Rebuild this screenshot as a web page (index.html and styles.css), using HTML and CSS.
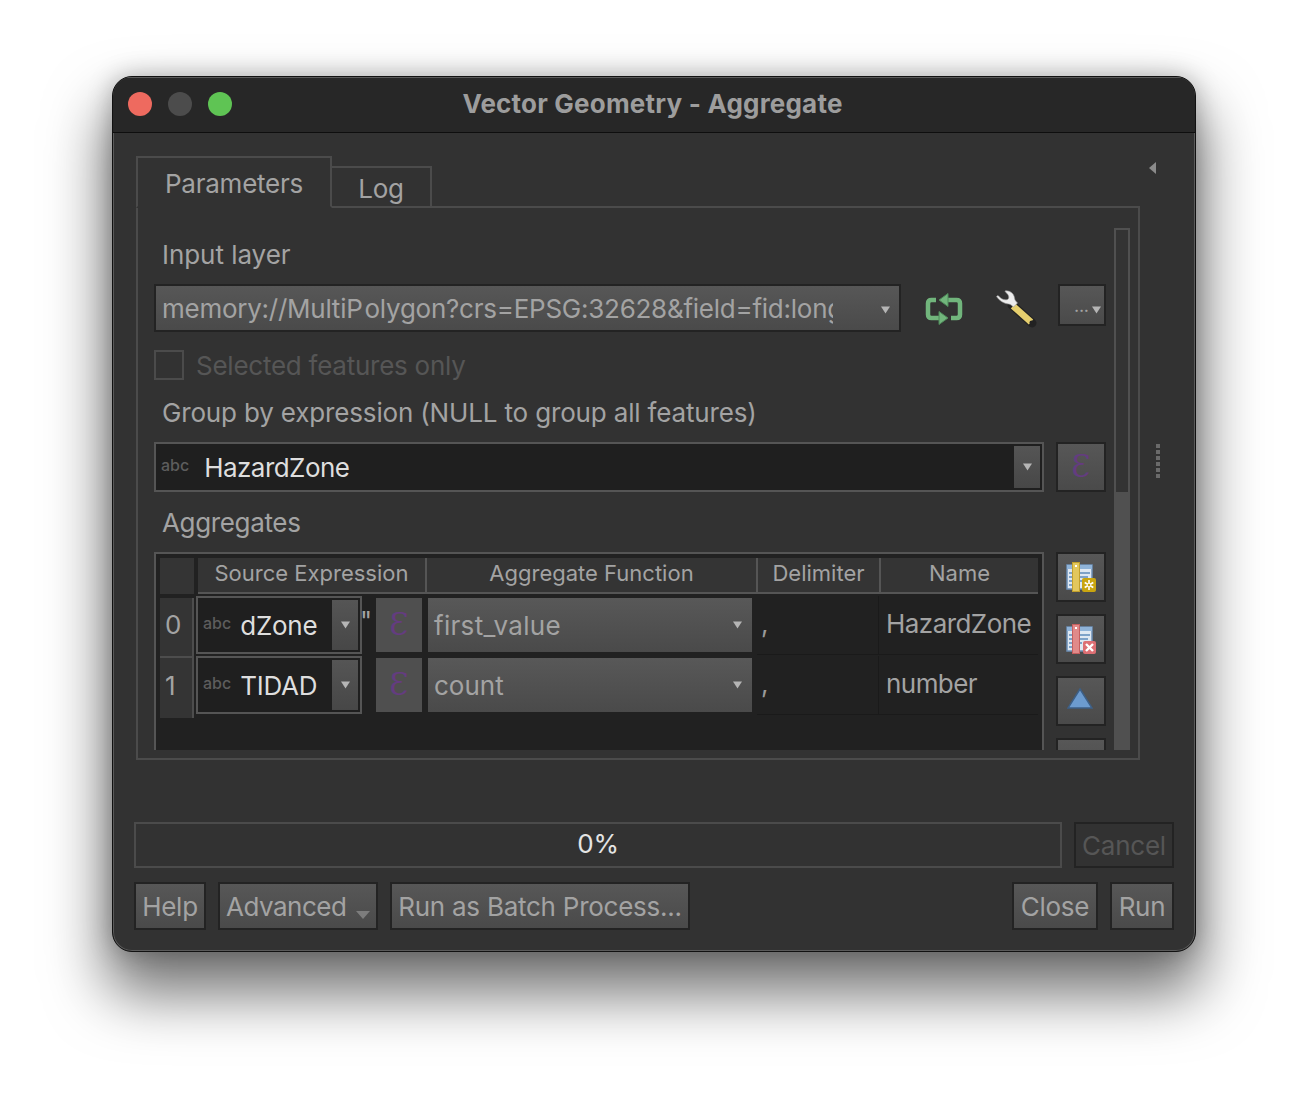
FILE: index.html
```html
<!DOCTYPE html>
<html lang="en">
<head>
<meta charset="utf-8">
<title>Vector Geometry - Aggregate</title>
<link rel="stylesheet" href="styles.css">
</head>
<body>
<svg class="defs" width="0" height="0" aria-hidden="true">
  <symbol id="arrow" viewBox="0 0 10 8"><path d="M0 0h10L5 8z"/></symbol>
</svg>

<main class="window">
  <header class="titlebar">
    <div class="lights">
      <span class="light red"></span><span class="light grey"></span><span class="light green"></span>
    </div>
    <h1 class="title">Vector Geometry - Aggregate</h1>
  </header>

  <div class="body">
    <div class="tabs">
      <div class="tab active">Parameters</div>
      <div class="tab">Log</div>
    </div>
    <svg class="collapse" width="7" height="12" viewBox="0 0 7 12"><path d="M7 0v12L0 6z" fill="#8b8b8b"/></svg>
    <div class="splitter"><i></i><i></i><i></i><i></i><i></i><i></i></div>

    <section class="pane">
      <div class="pane-main">
        <label class="label first">Input layer</label>
        <div class="layer-row">
          <div class="combo layer-combo">
            <span class="combo-text">memory://MultiP<span class="gap">olygon?crs=EPSG:32628&amp;field=fid:long</span></span>
            <svg class="arrow-s"><use href="#arrow"/></svg>
          </div>
          <svg class="ico-refresh" width="38" height="33" viewBox="0 0 38 33">
            <g fill="none" stroke="#71b57c" stroke-width="4.500" stroke-linejoin="round">
              <path d="M11 7H6.500Q3 7 3 10.500v11Q3 25 6.500 25H16"/>
              <path d="M21 7h10.500Q35 7 35 10.500v11q0 3.500-3.500 3.500H26"/>
            </g>
            <path d="M23 .5v13l-9-6.500zM14 18.500v13l9-6.500z" fill="#71b57c" stroke="#4f8a5a" stroke-width="1"/>
          </svg>
          <svg class="ico-wrench" width="42" height="38" viewBox="0 0 42 38">
            <path d="M17 15L37 33" stroke="#222" stroke-width="9" stroke-linecap="round"/>
            <path d="M18 16l18 16" stroke="#e6cf6e" stroke-width="6.500"/>
            <circle cx="36.500" cy="32.500" r="2" fill="#222"/>
            <path d="M10 1C14 0 19 3 19.500 8c.2 2 1.500 3.500 3 5l-4 4c-1.600-1.500-3-2.800-5-3C9 13.500 4.500 11 1.500 6.500L3 5.500C6 9 9.500 10.500 12.500 9.500 14.500 8.500 14 5.500 12 3.500 11 2.500 10 1.800 10 1z" fill="#ececec" stroke="#9a9a9a" stroke-width=".6"/>
          </svg>
          <button class="btn more" type="button"><span>...</span><svg class="arrow-s"><use href="#arrow"/></svg></button>
        </div>

        <div class="check-row">
          <span class="check"></span>
          <span class="check-label">Selected features only</span>
        </div>

        <label class="label group">Group by expression (NULL to group all features)</label>
        <div class="group-row">
          <div class="field-combo wide">
            <span class="abc">abc</span>
            <span class="field-text">HazardZone</span>
            <span class="drop"><svg class="arrow-s"><use href="#arrow"/></svg></span>
          </div>
          <button class="btn side-eps" type="button"><span class="eps">Ɛ</span></button>
        </div>

        <label class="label aggs">Aggregates</label>
        <div class="agg-row">
          <div class="table">
            <div class="thead">
              <div class="corner"></div>
              <div class="th c-src">Source Expression</div>
              <div class="th c-fn">Aggregate Function</div>
              <div class="th c-del">Delimiter</div>
              <div class="th c-name">Name</div>
            </div>
            <div class="trow">
              <div class="vh">0</div>
              <div class="field-combo small">
                <span class="abc">abc</span>
                <span class="field-text">dZone</span>
                <span class="drop"><svg class="arrow-s"><use href="#arrow"/></svg></span>
              </div>
              <div class="quote">"</div>
              <button class="eps-cell" type="button"><span class="eps">Ɛ</span></button>
              <div class="fn-combo"><span class="fn-long">first_value</span><svg class="arrow-s"><use href="#arrow"/></svg></div>
              <div class="td del">,</div>
              <div class="td name">HazardZone</div>
            </div>
            <div class="trow">
              <div class="vh last">1</div>
              <div class="field-combo small">
                <span class="abc">abc</span>
                <span class="field-text">TIDAD</span>
                <span class="drop"><svg class="arrow-s"><use href="#arrow"/></svg></span>
              </div>
              <div class="quote"></div>
              <button class="eps-cell" type="button"><span class="eps">Ɛ</span></button>
              <div class="fn-combo"><span>count</span><svg class="arrow-s"><use href="#arrow"/></svg></div>
              <div class="td del">,</div>
              <div class="td name">number</div>
            </div>
          </div>
          <div class="side-btns">
            <button class="btn side" type="button">
              <svg width="30" height="30" viewBox="0 0 30 30">
                <rect x="1" y="3" width="25" height="24" fill="#dfe8f2" stroke="#6c8fb5" stroke-width="1.500"/>
                <path d="M1 3h25v4H1z" fill="#8fb3d8"/>
                <path d="M13 11h11M13 15h9M13 19h3M3 11h3M3 15h3M3 19h3M3 23h3" stroke="#7ea2c8" stroke-width="2"/>
                <rect x="6.500" y="0.500" width="7" height="29" fill="#e2c75c" stroke="#c2a02c"/>
                <rect x="9" y="3" width="2" height="2" fill="#fff"/>
                <rect x="16" y="16" width="14" height="14" rx="2" fill="#c9a510"/>
                <path d="M23 18v10M18.700 20.500l8.600 5M27.300 20.500l-8.600 5" stroke="#fff" stroke-width="1.600"/>
                <circle cx="23" cy="23" r="1.300" fill="#c9a510"/>
              </svg>
            </button>
            <button class="btn side" type="button">
              <svg width="30" height="30" viewBox="0 0 30 30">
                <rect x="1" y="3" width="25" height="24" fill="#dfe8f2" stroke="#6c8fb5" stroke-width="1.500"/>
                <path d="M1 3h25v4H1z" fill="#8fb3d8"/>
                <path d="M13 11h11M13 15h9M13 19h3M3 11h3M3 15h3M3 19h3M3 23h3" stroke="#7ea2c8" stroke-width="2"/>
                <rect x="6.500" y="0.500" width="7" height="29" fill="#e08a8a" stroke="#c65f5f"/>
                <rect x="9" y="3" width="2" height="2" fill="#fff"/>
                <rect x="17" y="17" width="13" height="13" rx="2" fill="#dd6f74"/>
                <path d="M20 20l7 7M27 20l-7 7" stroke="#fff" stroke-width="2.400"/>
              </svg>
            </button>
            <button class="btn side tri" type="button">
              <svg width="26" height="22" viewBox="0 0 26 22"><path d="M13 1l12 19H1z" fill="#6c9bcf" stroke="#3d5f86" stroke-width="1.500"/></svg>
            </button>
            <button class="btn side" type="button"></button>
          </div>
        </div>
      </div>
      <div class="scrollbar"><div class="handle"></div></div>
    </section>

    <div class="progress-row">
      <div class="progress">0%</div>
      <button class="btn cancel" type="button">Cancel</button>
    </div>

    <div class="button-row">
      <button class="btn help" type="button">Help</button>
      <button class="btn advanced" type="button"><span>Advanced</span><svg class="adv-arrow" viewBox="0 0 14 8"><path d="M0 0h14L7 8z"/></svg></button>
      <button class="btn batch" type="button">Run as Batch Process...</button>
      <span class="spacer"></span>
      <button class="btn close" type="button">Close</button>
      <button class="btn run" type="button">Run</button>
    </div>
  </div>
</main>
</body>
</html>
```

FILE: styles.css
```css
* { box-sizing: border-box; }

html, body { margin: 0; height: 100%; background: #fff; overflow: hidden; }

body {
  padding: 76px 112px 0;
  font-family: Inter, "Liberation Sans", sans-serif;
  font-size: 26px;
  letter-spacing: -.25px;
  color: #a3a3a3;
}

.defs { position: absolute; }

.window {
  width: 1084px;
  height: 876px;
  border-radius: 20px;
  background: #323232;
  border: 1px solid #111;
  box-shadow: inset 0 0 0 1px #5a5a5a, 0 36px 60px 6px rgba(0, 0, 0, .55), 0 0 24px rgba(0, 0, 0, .25);
  overflow: hidden;
  display: flex;
  flex-direction: column;
}

.titlebar {
  height: 56px;
  flex: none;
  background: #272727;
  border-bottom: 1px solid #0e0e0e;
  box-shadow: inset 0 1px 0 #5a5a5a;
  position: relative;
  display: flex;
  align-items: center;
  justify-content: center;
}

.lights { position: absolute; left: 15px; top: 15px; display: flex; gap: 16px; }
.light { width: 24px; height: 24px; border-radius: 50%; }
.red { background: #ee6a5f; }
.grey { background: #4c4c4c; }
.green { background: #5fc454; }

.title { margin: 0; font-size: 26px; font-weight: 700; color: #9d9d9d; letter-spacing: .2px; padding: 0 3px 3px 0; }

.body { flex: 1; position: relative; padding: 23px 21px 0; display: flex; flex-direction: column; }

.tabs { display: flex; align-items: flex-end; height: 52px; margin-left: 2px; position: relative; z-index: 1; margin-bottom: -2px; }
.tab {
  height: 42px;
  width: 100px;
  border: 2px solid #4b4b4b;
  border-left: 0;
  display: flex;
  align-items: center;
  justify-content: center;
  padding-top: 2px;
}
.tab.active {
  height: 52px;
  width: 196px;
  border-left: 2px solid #4b4b4b;
  border-bottom-color: #323232;
  padding: 2px 0 0;
  background: #323232;
}

.collapse { position: absolute; left: 1036px; top: 29px; }
.splitter { position: absolute; left: 1043px; top: 311px; display: grid; gap: 2px; }
.splitter i { display: block; width: 4px; height: 4px; background: #6a6a6a; }

.pane {
  margin-left: 2px;
  width: 1004px;
  height: 554px;
  border: 2px solid #4b4b4b;
  padding: 20px 8px 8px 16px;
  display: flex;
  gap: 8px;
}
.pane-main { width: 952px; height: 522px; overflow: hidden; flex: none; }

.label { display: block; padding-left: 8px; line-height: 32px; }
.label.first { height: 56px; line-height: 54px; letter-spacing: -.05px; }
.label.group { height: 46px; line-height: 34px; letter-spacing: -.16px; }
.label.aggs { height: 60px; line-height: 62px; letter-spacing: -.35px; }

.layer-row { display: flex; align-items: flex-start; height: 66px; }

.combo {
  width: 748px;
  height: 48px;
  background: linear-gradient(#575757, #4a4a4a);
  border: 2px solid #232323;
  display: flex;
  align-items: center;
  padding-left: 6px;
  position: relative;
}
.combo-text { width: 671px; overflow: hidden; white-space: nowrap; letter-spacing: -.25px; }
.gap { margin-left: 2px; }

.arrow-s { width: 9px; height: 8px; fill: #b5b5b5; flex: none; }
.layer-combo .arrow-s { position: absolute; right: 9px; top: 20px; }

.ico-refresh { margin: 9px 0 0 24px; flex: none; }
.ico-wrench { margin: 6px 0 0 32px; flex: none; }

.btn {
  font: inherit;
  letter-spacing: inherit;
  color: #a3a3a3;
  height: 48px;
  padding: 0 6px;
  background: linear-gradient(#575757, #4a4a4a);
  border: 2px solid #232323;
  white-space: nowrap;
}
.more { width: 48px; height: 42px; margin-left: 21px; position: relative; padding: 0; flex: none; }
.more span { position: absolute; left: 14px; top: 8px; font-size: 18px; line-height: 24px; }
.more .arrow-s { position: absolute; right: 3px; top: 20px; }

.check-row { display: flex; align-items: center; height: 30px; gap: 12px; margin-bottom: 16px; }
.check { width: 30px; height: 30px; border: 2px solid #4b4b4b; }
.check-label { color: #565656; }

.group-row { display: flex; gap: 12px; }

.field-combo {
  background: #1f1f1f;
  border: 2px solid #555;
  display: flex;
  align-items: center;
  position: relative;
}
.wide { width: 890px; height: 50px; }
.wide .field-text { letter-spacing: -.55px; }
.abc { font-size: 16px; font-weight: 500; letter-spacing: 0; color: #5d5d5d; margin: 0 15px 0 5px; position: relative; top: -2px; }
.field-text { color: #dedede; white-space: nowrap; }
.drop {
  position: absolute;
  right: 2px;
  top: 2px;
  bottom: 2px;
  width: 26px;
  background: linear-gradient(#555, #474747);
  display: flex;
  align-items: center;
  justify-content: center;
}

.eps {
  font-family: "DejaVu Serif", serif;
  font-size: 31px;
  line-height: 1;
  letter-spacing: 0;
  color: #643c80;
  padding-bottom: 2px;
}

.side-eps { width: 50px; height: 50px; padding: 0; display: flex; align-items: center; justify-content: center; }

.agg-row { display: flex; gap: 12px; }

.table { width: 890px; height: 240px; flex: none; background: #212121; border: 2px solid #555; padding: 4px; }

.thead { display: flex; height: 38px; }
.corner { width: 34px; height: 36px; background: #343434; margin-right: 4px; flex: none; }
.th {
  background: #343434;
  border-bottom: 2px solid #555;
  border-right: 2px solid #555;
  height: 36px;
  font-size: 22px;
  letter-spacing: 0;
  line-height: 30px;
  text-align: center;
  flex: none;
}
.c-src { width: 229px; }
.c-fn { width: 331px; }
.c-del { width: 123px; }
.c-name { width: 157px; border-right: 0; }

.trow { display: flex; height: 60px; position: relative; }
.vh {
  width: 34px;
  height: 60px;
  flex: none;
  background: #343434;
  border-right: 2px solid #4d4d4d;
  border-bottom: 2px solid #4d4d4d;
  display: flex;
  align-items: center;
  padding: 0 0 5px 5px;
  margin-top: 2px;
}
.vh.last { border-bottom: 0; }
.small { width: 166px; height: 58px; margin-left: 2px; flex: none; }
.small .abc { margin: 0 9px 0 5px; }
.quote { width: 14px; flex: none; line-height: 28px; padding-top: 11px; margin-left: -2px; margin-right: 2px; }
.eps-cell {
  width: 46px;
  height: 54px;
  margin-top: 2px;
  padding: 0;
  background: #4f4f4f;
  border: 0;
  flex: none;
  display: flex;
  align-items: center;
  justify-content: center;
}
.fn-combo {
  width: 324px;
  height: 54px;
  margin: 2px 0 0 6px;
  flex: none;
  padding-left: 6px;
  letter-spacing: 0;
  background: linear-gradient(#585858, #4a4a4a);
  display: flex;
  align-items: center;
  position: relative;
}
.fn-long { letter-spacing: .3px; }
.fn-combo .arrow-s { position: absolute; right: 10px; top: 23px; }
.td { flex: none; height: 59px; border-bottom: 1px solid #1a1a1a; }
.del { width: 122px; margin-left: 5px; padding: 12px 0 0 4px; border-right: 1px solid #1a1a1a; color: #9a9a9a; }
.name { width: 159px; padding: 12px 0 0 7px; white-space: nowrap; letter-spacing: -.55px; }

.side-btns { display: flex; flex-direction: column; gap: 12px; }
.side { width: 50px; height: 50px; padding: 0; display: flex; align-items: center; justify-content: center; flex: none; }
.tri { padding: 0 2px 4px 0; }

.scrollbar { width: 16px; height: 522px; background: #505050; flex: none; }
.handle { height: 266px; background: #333; border: 2px solid #505050; }

.progress-row { display: flex; gap: 12px; margin-top: 62px; }
.progress {
  width: 928px;
  height: 46px;
  border: 2px solid #4b4b4b;
  display: flex;
  align-items: center;
  justify-content: center;
  padding-bottom: 3px;
  color: #e4e4e4;
}
.cancel { width: 100px; height: 46px; background: #323232; color: #565656; padding: 0; }

.button-row { display: flex; gap: 12px; margin-top: 14px; }
.help { width: 72px; }
.advanced { width: 160px; display: flex; align-items: center; justify-content: space-between; padding-right: 5px; }
.advanced span { letter-spacing: -.5px; }
.batch { width: 300px; }
.close { width: 86px; }
.run { width: 64px; }
.adv-arrow { width: 16px; height: 8px; fill: #7d7d7d; margin-top: 18px; }
.spacer { flex: 1; }
```
